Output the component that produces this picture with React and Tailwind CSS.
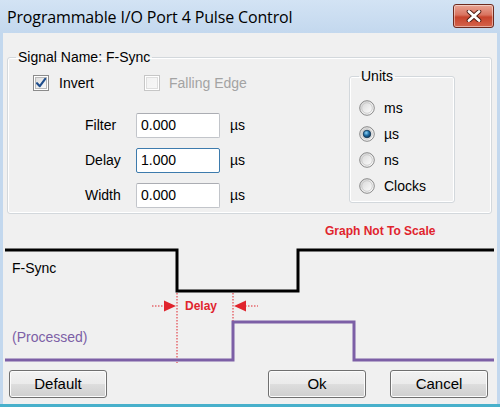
import React from "react";

function CheckBox({ checked, disabled }) {
  return (
    <svg width="16" height="16" viewBox="0 0 16 16" className="shrink-0">
      <defs>
        <linearGradient id={disabled ? "cbd" : "cbn"} x1="0" y1="0" x2="1" y2="1">
          <stop offset="0" stopColor={disabled ? "#f2f2f2" : "#dcdcdc"} />
          <stop offset="1" stopColor={disabled ? "#f7f7f7" : "#fbfbfb"} />
        </linearGradient>
      </defs>
      <rect x="0.5" y="0.5" width="15" height="15" fill="#fff" stroke={disabled ? "#c6c6c6" : "#8b8b8b"} />
      <rect x="2.5" y="2.5" width="11" height="11" fill={`url(#${disabled ? "cbd" : "cbn"})`} stroke={disabled ? "#dedede" : "#b9b9b9"} />
      {checked && (
        <path d="M4 8.2 L6.8 11.2 L12.2 3.8" fill="none" stroke="#1e4d8c" strokeWidth="2.1" strokeLinecap="round" strokeLinejoin="round" />
      )}
    </svg>
  );
}

function Radio({ checked, id }) {
  return (
    <svg width="16" height="16" viewBox="0 0 16 16" className="shrink-0">
      <defs>
        <linearGradient id={`rg${id}`} x1="0" y1="0" x2="1" y2="1">
          <stop offset="0" stopColor="#d2d2d2" />
          <stop offset="0.6" stopColor="#f0f0f0" />
          <stop offset="1" stopColor="#ffffff" />
        </linearGradient>
        <radialGradient id={`rs${id}`} cx="0.4" cy="0.35" r="0.7">
          <stop offset="0" stopColor="#8fd3f5" />
          <stop offset="0.5" stopColor="#1f6ea6" />
          <stop offset="1" stopColor="#0b2e4e" />
        </radialGradient>
      </defs>
      <circle cx="8" cy="8" r="7.3" fill={`url(#rg${id})`} stroke="#8a8a8a" strokeWidth="1" />
      <circle cx="8" cy="8" r="5.3" fill="none" stroke="#c4c4c4" strokeWidth="0.8" />
      {checked && <circle cx="8" cy="8" r="3.8" fill={`url(#rs${id})`} stroke="#14344f" strokeWidth="0.8" />}
    </svg>
  );
}

function Field({ label, value, focused }) {
  return (
    <div className="flex items-center h-[25px]">
      <span className="w-[51px] text-[14px] text-black">{label}</span>
      <div
        className={`w-[84px] h-[25px] bg-white rounded-[2px] border flex items-center pl-[4px] text-[14px] text-black ${
          focused ? "border-[#3d7bad]" : "border-[#c2c5ca] border-t-[#abadb3]"
        }`}
      >
        {value}
      </div>
      <span className="ml-[10px] text-[14px] text-black">µs</span>
    </div>
  );
}

function Button({ children, className }) {
  return (
    <div
      className={`w-[98px] h-[28px] rounded-[3px] border border-[#707070] bg-[linear-gradient(to_bottom,#f2f2f2_0%,#ebebeb_48%,#dddddd_52%,#cfcfcf_100%)] shadow-[inset_0_0_0_1px_#fcfcfc] flex items-center justify-center text-[15px] text-black ${className || ""}`}
    >
      {children}
    </div>
  );
}

export default function App() {
  const units = ["ms", "µs", "ns", "Clocks"];
  return (
    <div className="w-[500px] h-[407px] flex flex-col bg-[#c3d8ee] border-b-[3px] border-[#48b0cb] font-['Liberation_Sans',Arial,sans-serif] overflow-hidden">
      {/* Title bar */}
      <div className="h-[33px] shrink-0 flex items-center pl-[7px] pr-[6px] bg-[linear-gradient(to_bottom,#d3e3f4,#c3d8ee)]">
        <span className="font-['Open_Sans',sans-serif] text-[16px] text-black tracking-[-0.15px] pt-[1px]">
          Programmable I/O Port 4 Pulse Control
        </span>
        <div className="ml-auto mb-[1px] w-[41px] h-[24px] rounded-[3px] border border-[#6d2a1f] bg-[linear-gradient(to_bottom,#e9a596_0%,#d9735f_45%,#c7432c_55%,#d4644c_100%)] shadow-[inset_0_0_0_1px_rgba(255,255,255,0.45)] flex items-center justify-center">
          <svg width="16" height="12" viewBox="0 0 16 12">
            <path d="M3 1.5 L13 10.5 M13 1.5 L3 10.5" stroke="#4a1a12" strokeWidth="4.6" strokeLinecap="round" />
            <path d="M3 1.5 L13 10.5 M13 1.5 L3 10.5" stroke="#ffffff" strokeWidth="2.8" strokeLinecap="round" />
          </svg>
        </div>
      </div>

      {/* Client */}
      <div className="flex-1 mx-[3px] bg-[#f0f0f0] flex flex-col">
        <fieldset className="mt-[16px] ml-[4px] mr-[5px] h-[165px] border border-[#d3d8dc] rounded-[3px] p-0 shadow-[inset_0_0_0_1px_#ffffff] shrink-0">
          <legend className="ml-[8px] px-[2px] text-[14px] leading-[16px] text-black">Signal Name: F-Sync</legend>
          <div className="flex items-start">
            <div className="pl-[25px] pt-[8px] flex flex-col">
              <div className="flex items-center h-[20px]">
                <div className="w-[111px] flex items-center gap-[10px]">
                  <CheckBox checked />
                  <span className="text-[14px] text-black">Invert</span>
                </div>
                <div className="flex items-center gap-[9px]">
                  <CheckBox disabled />
                  <span className="text-[14px] text-[#a3a3a3]">Falling Edge</span>
                </div>
              </div>
              <div className="mt-[20px] ml-[52px] flex flex-col gap-[10px]">
                <Field label="Filter" value="0.000" />
                <Field label="Delay" value="1.000" focused />
                <Field label="Width" value="0.000" />
              </div>
            </div>
            <fieldset className="ml-auto mr-[36px] mt-[4px] w-[106px] h-[134px] border border-[#d3d8dc] rounded-[3px] p-0 shadow-[inset_0_0_0_1px_#ffffff]">
              <legend className="ml-[9px] px-[2px] text-[14px] leading-[14px] text-black">Units</legend>
              <div className="pt-[17px] pl-[9px] flex flex-col gap-[10px]">
                {units.map((u, i) => (
                  <div key={u} className="flex items-center h-[16px] gap-[9px]">
                    <Radio checked={i === 1} id={i} />
                    <span className="text-[14px] text-black">{u}</span>
                  </div>
                ))}
              </div>
            </fieldset>
          </div>
        </fieldset>

        {/* Graph */}
        <div className="relative h-[152px] shrink-0">
          <svg className="absolute inset-0" width="494" height="152" viewBox="3 214 494 152">
            <text x="325" y="231" dominantBaseline="central" fontFamily="Liberation Sans, Arial, sans-serif" fontWeight="bold" fontSize="12" fill="#e0242d">
              Graph Not To Scale
            </text>
            <polyline points="5,250 177,250 177,291 298,291 298,250 494,250" fill="none" stroke="#000" strokeWidth="3" />
            <text x="12" y="268" dominantBaseline="central" fontFamily="Liberation Sans, Arial, sans-serif" fontSize="14" fill="#000">
              F-Sync
            </text>
            <line x1="177" y1="293" x2="177" y2="363" stroke="#e0242d" strokeWidth="1" strokeDasharray="1.5 1.5" />
            <line x1="233" y1="293" x2="233" y2="322" stroke="#e0242d" strokeWidth="1" strokeDasharray="1.5 1.5" />
            <line x1="152" y1="306" x2="166" y2="306" stroke="#e0242d" strokeWidth="1.2" strokeDasharray="1.5 1.5" />
            <polygon points="164,300.5 176,306 164,311.5" fill="#e0242d" />
            <text x="185" y="306" dominantBaseline="central" fontFamily="Liberation Sans, Arial, sans-serif" fontWeight="bold" fontSize="12" fill="#e0242d">
              Delay
            </text>
            <polygon points="246,300.5 234,306 246,311.5" fill="#e0242d" />
            <line x1="245" y1="306" x2="258" y2="306" stroke="#e0242d" strokeWidth="1.2" strokeDasharray="1.5 1.5" />
            <polyline points="5,360 233,360 233,322 354,322 354,360 494,360" fill="none" stroke="#7c5fa6" strokeWidth="3" />
            <text x="12" y="337" dominantBaseline="central" fontFamily="Liberation Sans, Arial, sans-serif" fontSize="14" fill="#7c5fa6">
              (Processed)
            </text>
          </svg>
        </div>

        {/* Buttons */}
        <div className="mt-[4px] flex pl-[6px] pr-[9px]">
          <Button>Default</Button>
          <Button className="ml-auto">Ok</Button>
          <Button className="ml-[24px]">Cancel</Button>
        </div>
      </div>
    </div>
  );
}
